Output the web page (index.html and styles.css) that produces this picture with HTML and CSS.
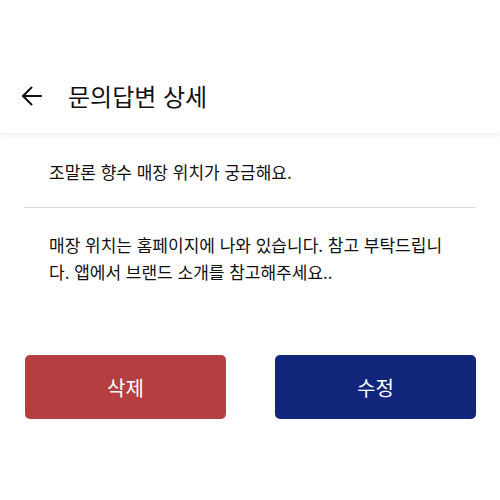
FILE: index.html
```html
<!DOCTYPE html>
<html lang="ko">
<head>
  <meta charset="UTF-8">
  <meta name="viewport" content="width=device-width, initial-scale=1.0">
  <title>문의답변 상세</title>
  <link rel="stylesheet" href="styles.css">
</head>
<body>
  <header class="app-bar">
    <a href="#" class="back" aria-label="뒤로">
      <svg width="22" height="22" viewBox="0 0 22 22" fill="none" stroke="#111" stroke-width="2" stroke-linecap="round" stroke-linejoin="round">
        <path d="M20 11H2"/>
        <path d="M10.5 2.5L2 11l8.5 8.5"/>
      </svg>
    </a>
    <h1>문의답변 상세</h1>
  </header>

  <main class="detail">
    <p class="question">조말론 향수 매장 위치가 궁금해요.</p>
    <hr class="divider">
    <p class="answer">매장 위치는 홈페이지에 나와 있습니다. 참고 부탁드립니다. 앱에서 브랜드 소개를 참고해주세요..</p>
  </main>

  <div class="actions">
    <button class="btn btn-delete">삭제</button>
    <button class="btn btn-edit">수정</button>
  </div>
</body>
</html>
```

FILE: styles.css
```css
body {
  margin: 0;
  font-family: "Noto Sans CJK KR", "Noto Sans", sans-serif;
  background: #fff;
  color: #111;
}
.app-bar {
  height: 133px;
  box-sizing: border-box;
  display: flex;
  align-items: flex-end;
  padding: 0 0 17px 21px;
  box-shadow: 0 2px 6px rgba(0, 0, 0, 0.08);
}
.app-bar .back {
  display: flex;
  align-items: center;
  height: 40px;
}
.app-bar h1 {
  margin: 0 0 0 25px;
  font-size: 24px;
  font-weight: 400;
  line-height: 40px;
}
.detail {
  padding: 25px 0 0;
}
.question {
  margin: 0;
  padding: 0 49px;
  font-size: 17px;
  line-height: 27px;
}
.divider {
  margin: 22px 24px 23px;
  border: none;
  border-top: 1px solid #ddd;
}
.answer {
  margin: 0;
  padding: 0 49px;
  font-size: 17px;
  line-height: 27px;
  word-break: break-all;
}
.actions {
  display: flex;
  gap: 49px;
  padding: 70px 24px 0 25px;
}
.btn {
  flex: 1;
  height: 64px;
  border: none;
  border-radius: 5px;
  color: #fff;
  font-family: inherit;
  font-size: 20px;
  cursor: pointer;
}
.btn-delete {
  background: #b53f40;
}
.btn-edit {
  background: #11267b;
}
```
